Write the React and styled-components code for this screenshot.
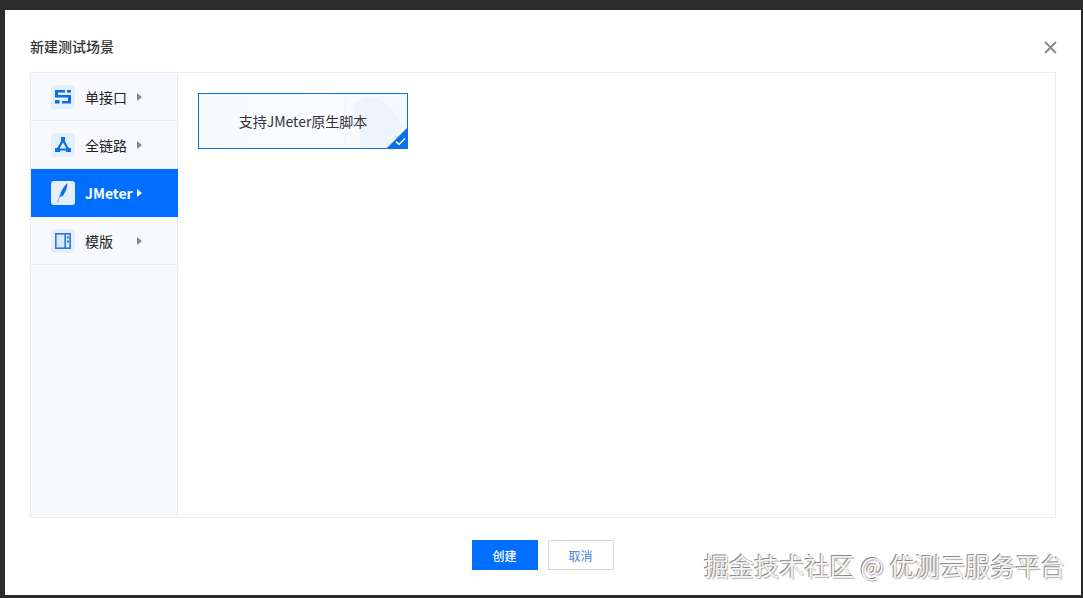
import React from "react";
import styled, { createGlobalStyle } from "styled-components";

const GlobalStyle = createGlobalStyle`
  html, body {
    margin: 0;
    padding: 0;
    height: 100%;
    overflow: hidden;
    background: #2b2b2b;
    font-family: "Noto Sans CJK SC", "Noto Sans", sans-serif;
  }
  #root {
    height: 100%;
  }
`;

const Page = styled.div`
  width: 1083px;
  height: 598px;
  box-sizing: border-box;
  padding: 10px 2px 3px 5px;
  display: flex;
`;

const Modal = styled.div`
  position: relative;
  flex: 1;
  background: #fff;
  display: flex;
  flex-direction: column;
  padding: 0 25px 0 25px;
`;

const Head = styled.div`
  height: 62px;
  flex: none;
  display: flex;
  align-items: center;
  justify-content: space-between;
  padding-top: 10px;
  box-sizing: border-box;
`;

const Title = styled.div`
  font-size: 14px;
  font-weight: 500;
  color: #333;
`;

const Close = styled.div`
  display: flex;
  margin-top: 3px;
  margin-right: -1px;
`;

const Panel = styled.div`
  height: 446px;
  flex: none;
  box-sizing: border-box;
  border: 1px solid #ebecef;
  display: flex;
`;

const Side = styled.div`
  width: 147px;
  flex: none;
  box-sizing: border-box;
  background: #f8f9fd;
  border-right: 1px solid #ebecef;
`;

const Item = styled.div`
  height: 48px;
  box-sizing: border-box;
  display: flex;
  align-items: center;
  padding-left: 20px;
  background: ${(p) => (p.$active ? "#006eff" : "transparent")};
  color: ${(p) => (p.$active ? "#fff" : "#222")};
  border-bottom: 1px solid ${(p) => (p.$active ? "#006eff" : "#e9eaef")};
  font-size: 14px;
  font-weight: ${(p) => (p.$active ? 700 : 400)};
  margin-right: ${(p) => (p.$active ? "-1px" : "0")};
`;

const IconBox = styled.div`
  width: 24px;
  height: 24px;
  flex: none;
  border-radius: 3px;
  background: ${(p) => (p.$active ? "#e3eeff" : "#e6effd")};
  display: flex;
  align-items: center;
  justify-content: center;
  margin-right: 10px;
`;

const Label = styled.div`
  width: 52px;
  flex: none;
  white-space: nowrap;
`;

const Arrow = styled.div`
  width: 0;
  height: 0;
  border-left: 5px solid ${(p) => (p.$active ? "#fff" : "#888")};
  border-top: 4px solid transparent;
  border-bottom: 4px solid transparent;
`;

const Content = styled.div`
  flex: 1;
  padding: 20px;
`;

const Card = styled.div`
  position: relative;
  width: 210px;
  height: 56px;
  box-sizing: border-box;
  border: 1px solid #0a74d6;
  background: linear-gradient(90deg, #f6fbff 0%, #fafcff 60%, #f3f8fe 100%);
  overflow: hidden;
  display: flex;
  align-items: center;
  justify-content: center;
  font-size: 14px;
  color: #333;
`;

const CardArt = styled.svg`
  position: absolute;
  right: 0;
  top: 0;
`;

const CardText = styled.span`
  position: relative;
`;

const Corner = styled.div`
  position: absolute;
  right: 0;
  bottom: 0;
  width: 0;
  height: 0;
  border-left: 20px solid transparent;
  border-bottom: 20px solid #0a6fe8;
`;

const Check = styled.svg`
  position: absolute;
  right: 1px;
  bottom: 2px;
`;

const Footer = styled.div`
  flex: 1;
  display: flex;
  justify-content: center;
  gap: 10px;
  padding-top: 22px;
  padding-right: 1px;
`;

const Button = styled.div`
  width: 66px;
  height: 30px;
  box-sizing: border-box;
  display: flex;
  align-items: center;
  justify-content: center;
  font-size: 12px;
  font-weight: ${(p) => (p.$primary ? 500 : 400)};
  background: ${(p) => (p.$primary ? "#006eff" : "#fff")};
  color: ${(p) => (p.$primary ? "#fff" : "#3d7fd6")};
  border: ${(p) => (p.$primary ? "none" : "1px solid #d6d8dc")};
`;

const Watermark = styled.div`
  position: absolute;
  left: 699px;
  top: 537px;
  font-size: 25px;
  line-height: 36px;
  letter-spacing: 0.1px;
  white-space: nowrap;
  color: #f4f4f4;
  text-shadow: -1px -1px 0 #8a8a8a, 1px 1px 1px #b0b0b0;
`;

const SingleIcon = () => (
  <svg width="16" height="14" viewBox="0 0 16 14" fill="#0a6fe8">
    <path d="M0 0h10v2.600H3V5h13v8.500H7V11h6V7.600H0z" />
    <path d="M12 0h4v2.600h-4z" />
    <path d="M0 10h4.500v3.500H0z" />
  </svg>
);

const LinkIcon = () => (
  <svg width="18" height="18" viewBox="0 0 18 18" fill="none">
    <path d="M9 4 3.800 13.500h10.400Z" stroke="#0a6fe8" strokeWidth="2.200" />
    <rect x="7" y="1" width="4" height="4" fill="#0a6fe8" />
    <rect x="1" y="12" width="5" height="4" fill="#0a6fe8" />
    <rect x="12" y="12" width="5" height="4" fill="#0a6fe8" />
  </svg>
);

const FeatherIcon = () => (
  <svg width="18" height="22" viewBox="0 0 18 22" fill="none">
    <path d="M13.500 1C10 4 7 8.500 5.500 14.500c1.500.5 3 0 4-1.500C11.500 9.500 13.500 5.500 13.500 1Z" fill="#0a6fe8" />
    <path d="M6.500 12 3.500 20.500" stroke="#7fb0f2" strokeWidth="1" />
  </svg>
);

const TemplateIcon = () => (
  <svg width="16" height="16" viewBox="0 0 16 16" fill="none">
    <rect x="0.800" y="0.800" width="14.400" height="14.400" stroke="#2a78e0" strokeWidth="1.600" fill="#dbe8fb" />
    <rect x="9.400" y="1" width="1.600" height="14" fill="#2a78e0" />
    <rect x="12" y="3.500" width="2" height="2" fill="#2a78e0" />
    <rect x="12" y="7.500" width="2" height="2" fill="#2a78e0" />
  </svg>
);

const menu = [
  { label: "单接口", icon: <SingleIcon /> },
  { label: "全链路", icon: <LinkIcon /> },
  { label: "JMeter", icon: <FeatherIcon />, active: true },
  { label: "模版", icon: <TemplateIcon /> },
];

const App = () => {
  return (
    <Page>
      <GlobalStyle />
      <Modal>
        <Head>
          <Title>新建测试场景</Title>
          <Close>
            <svg width="13" height="13" viewBox="0 0 13 13">
              <path d="M1 1l11 11M12 1 1 12" stroke="#888" strokeWidth="1.800" />
            </svg>
          </Close>
        </Head>
        <Panel>
          <Side>
            {menu.map((m) => (
              <Item key={m.label} $active={m.active}>
                <IconBox $active={m.active}>{m.icon}</IconBox>
                <Label>{m.label}</Label>
                <Arrow $active={m.active} />
              </Item>
            ))}
          </Side>
          <Content>
            <Card>
              <CardArt width="80" height="54" viewBox="0 0 80 54">
                <path d="M18 54V4h1v50Z" fill="#eef3fa" />
                <path d="M24 12C36 2 50 2 60 10c8 8 14 20 20 30v14H32C36 40 30 24 24 12Z" fill="#edf4fc" />
                <path d="M44 34 68 48" stroke="#f7faff" strokeWidth="1" />
              </CardArt>
              <CardText>支持JMeter原生脚本</CardText>
              <Corner />
              <Check width="11" height="9" viewBox="0 0 11 9">
                <path d="M1 4.500 4 7.500 10 1.500" fill="none" stroke="#fff" strokeWidth="1.500" />
              </Check>
            </Card>
          </Content>
        </Panel>
        <Footer>
          <Button $primary>创建</Button>
          <Button>取消</Button>
        </Footer>
        <Watermark>掘金技术社区 @ 优测云服务平台</Watermark>
      </Modal>
    </Page>
  );
};

export default App;
